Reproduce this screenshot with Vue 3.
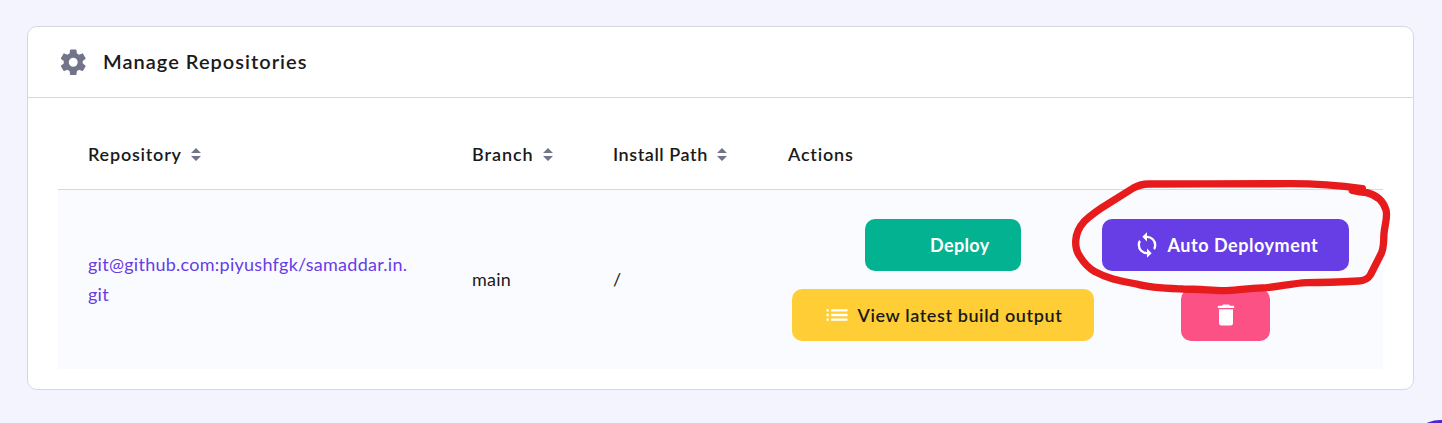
<script setup>
const columns = [
  { label: 'Repository', key: 'repository', sortable: true },
  { label: 'Branch', key: 'branch', sortable: true },
  { label: 'Install Path', key: 'path', sortable: true },
  { label: 'Actions', key: 'commands', sortable: false },
]
</script>

<template>
  <div class="page">
    <section class="card">
      <header class="card-header">
        <svg class="gear" viewBox="0 0 24 24"><path d="M12,15.5A3.5,3.5 0 0,1 8.5,12A3.5,3.5 0 0,1 12,8.5A3.5,3.5 0 0,1 15.5,12A3.5,3.5 0 0,1 12,15.5M19.43,12.97C19.47,12.65 19.5,12.33 19.5,12C19.5,11.67 19.47,11.34 19.43,11L21.54,9.37C21.73,9.22 21.78,8.95 21.66,8.73L19.66,5.27C19.54,5.05 19.27,4.96 19.05,5.05L16.56,6.05C16.04,5.66 15.5,5.32 14.87,5.07L14.5,2.42C14.46,2.18 14.25,2 14,2H10C9.75,2 9.54,2.18 9.5,2.42L9.13,5.07C8.5,5.32 7.96,5.66 7.44,6.05L4.95,5.05C4.73,4.96 4.46,5.05 4.34,5.27L2.34,8.73C2.21,8.95 2.27,9.22 2.46,9.37L4.57,11C4.53,11.34 4.5,11.67 4.5,12C4.5,12.33 4.53,12.65 4.57,12.97L2.46,14.63C2.27,14.78 2.21,15.05 2.34,15.27L4.34,18.73C4.46,18.95 4.73,19.03 4.95,18.95L7.44,17.94C7.96,18.34 8.5,18.68 9.13,18.93L9.5,21.58C9.54,21.82 9.75,22 10,22H14C14.25,22 14.46,21.82 14.5,21.58L14.87,18.93C15.5,18.67 16.04,18.34 16.56,17.94L19.05,18.95C19.27,19.03 19.54,18.95 19.66,18.73L21.66,15.27C21.78,15.05 21.73,14.78 21.54,14.63L19.43,12.97Z" /></svg>
        <h2 class="title">Manage Repositories</h2>
      </header>
      <div class="table">
        <div class="row head">
          <div v-for="c in columns" :key="c.key" class="cell">
            <span :class="c.key">{{ c.label }}</span>
            <svg v-if="c.sortable" class="sort" viewBox="0 0 10 13"><path d="M5 0L10 5H0ZM0 8H10L5 13Z" /></svg>
          </div>
        </div>
        <div class="row body">
          <div class="cell text"><a class="link">git@github.com:piyushfgk/samaddar.in.<br>git</a></div>
          <div class="cell text">main</div>
          <div class="cell text">/</div>
          <div class="cell actions">
            <button class="btn deploy">Deploy</button>
            <button class="btn auto">
              <svg class="icon" viewBox="0 0 24 24"><path d="M12,18A6,6 0 0,1 6,12C6,11 6.25,10.03 6.7,9.2L5.24,7.74C4.46,8.97 4,10.43 4,12A8,8 0 0,0 12,20V23L16,19L12,15M12,4V1L8,5L12,9V6A6,6 0 0,1 18,12C18,13 17.75,13.97 17.3,14.8L18.76,16.26C19.54,15.03 20,13.57 20,12A8,8 0 0,0 12,4Z" /></svg>
              <span>Auto Deployment</span>
            </button>
            <button class="btn view">
              <svg class="icon" viewBox="0 0 24 24"><path d="M3 13h2v-2H3v2zm0 4h2v-2H3v2zm0-8h2V7H3v2zm4 4h14v-2H7v2zm0 4h14v-2H7v2zM7 7v2h14V7H7z" /></svg>
              <span>View latest build output</span>
            </button>
            <button class="btn trash" aria-label="Delete">
              <svg class="icon" viewBox="0 0 24 24"><path d="M19,4H15.5L14.5,3H9.5L8.5,4H5V6H19M6,19A2,2 0 0,0 8,21H16A2,2 0 0,0 18,19V7H6V19Z" /></svg>
            </button>
          </div>
        </div>
      </div>
    </section>
    <!-- Hand-drawn highlight around the auto deployment button -->
    <svg class="scribble" viewBox="0 0 1146 390">
      <path d="M907 56C850 48 770 41 690 41C600 40 400 43 265 42Q243 42 220 54L150 98Q100 128 72 155C40 190 42 235 60 260Q80 292 105 305C150 330 190 334 230 342C270 354 320 355 370 357C410 357 440 360 490 362C530 361 550 355 620 353C660 349 700 340 740 338C790 338 840 336 895 333Q921 332 931 315L960 258C974 235 970 215 972 190C974 165 984 140 978 120C968 88 945 74 920 68Q900 66 877 61" />
    </svg>
    <div class="fab"></div>
  </div>
</template>

<style>
body {
  margin: 0;
}
</style>

<style scoped>
.page {
  position: relative;
  box-sizing: border-box;
  width: 1442px;
  height: 423px;
  padding: 26px 28px 33px 27px;
  overflow: hidden;
  background: #f4f4ff;
  color: #1a1a1a;
  font-family: Lato, "Open Sans", sans-serif;
}
.card {
  box-sizing: border-box;
  height: 364px;
  border: 1px solid #d8d8dc;
  border-radius: 10px;
  background: #fff;
}
.card-header {
  display: flex;
  align-items: center;
  box-sizing: border-box;
  height: 71px;
  padding-left: 29.5px;
  border-bottom: 1px solid #d8d8dc;
}
.gear {
  width: 30.5px;
  height: 30.5px;
  margin-right: 15px;
  fill: #72748a;
}
.title {
  margin: 0 0 2px;
  font-size: 20px;
  font-weight: 600;
  letter-spacing: 1.02px;
}
.table {
  padding: 21px 30px 0;
}
.row {
  display: grid;
  grid-template-columns: 384px 141px 175px 625px;
  align-items: center;
}
.head {
  box-sizing: border-box;
  height: 71px;
  border-bottom: 1px solid #d8d8dc;
  font-size: 18px;
  font-weight: 600;
}
.head .cell {
  display: flex;
  align-items: center;
}
.repository {
  letter-spacing: 0.78px;
}
.branch {
  letter-spacing: 0.92px;
}
.path {
  letter-spacing: 0.56px;
}
.commands {
  letter-spacing: 0.8px;
}
.cell {
  padding-left: 30px;
}
.sort {
  width: 10px;
  height: 13px;
  margin-left: 9.5px;
  fill: #72748a;
}
.body {
  height: 179px;
  background: #fafbff;
  font-size: 18px;
  line-height: 30px;
  letter-spacing: 0.26px;
}
.text {
  padding-bottom: 2px;
}
.link {
  color: #673de6;
  white-space: nowrap;
}
.actions {
  display: grid;
  grid-template-columns: 310px 255px;
  row-gap: 18px;
  justify-items: center;
}
.btn {
  display: flex;
  align-items: center;
  box-sizing: border-box;
  height: 52px;
  padding: 0;
  border: 0;
  border-radius: 10px;
  color: #fff;
  font-family: inherit;
  font-size: 18px;
  font-weight: 700;
  letter-spacing: 0.54px;
  white-space: nowrap;
}
.icon {
  flex: none;
  width: 28px;
  height: 28px;
  fill: #fff;
}
.deploy {
  width: 156px;
  padding-left: 65px;
  letter-spacing: 0.35px;
  background: #02b290;
}
.auto {
  width: 247px;
  padding-left: 30.5px;
  gap: 7px;
  background: #673de6;
}
.view {
  width: 302px;
  padding-left: 30.5px;
  gap: 7px;
  background: #ffcd35;
  color: #1a1a1a;
  font-weight: 600;
  letter-spacing: 0.6px;
}
.trash {
  justify-content: center;
  width: 89px;
  background: #fc5185;
}
.scribble {
  position: absolute;
  top: 170px;
  left: 1060px;
  width: 382px;
  height: 130px;
  fill: none;
  stroke: #e71b1b;
  stroke-width: 22px;
  stroke-linecap: round;
  stroke-linejoin: round;
}
.fab {
  position: absolute;
  top: 420px;
  left: 1410px;
  width: 60px;
  height: 60px;
  border-radius: 50%;
  background: #5025d1;
}
</style>
